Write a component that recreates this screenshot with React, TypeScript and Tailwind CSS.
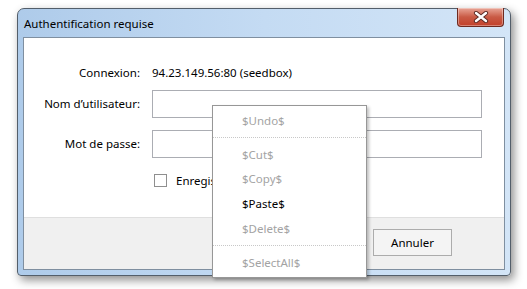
import React from "react";

const font = { fontFamily: '"Segoe UI", "Noto Sans", "Open Sans", sans-serif' };

function CloseButton() {
  return (
    <div className="-mt-px flex h-[19px] w-[47px] items-center justify-center rounded-b-[4px] border border-t-0 border-[#6e2a20] bg-gradient-to-b from-[#e8a597] via-[#c95a45] to-[#c2402a] shadow-[inset_0_0_0_1px_rgba(255,255,255,0.35)]">
      <svg width="16" height="12" viewBox="0 0 16 12">
        <path d="M3 2 L13 10 M13 2 L3 10" stroke="#5a2a24" strokeWidth="4.2" strokeLinecap="round" />
        <path d="M3 2 L13 10 M13 2 L3 10" stroke="#ffffff" strokeWidth="2.4" strokeLinecap="round" />
      </svg>
    </div>
  );
}

function MenuItem({ label, enabled = false }: { label: string; enabled?: boolean }) {
  return (
    <div className={`flex h-[25px] items-center pl-[29px] text-[11.5px] ${enabled ? "text-black" : "text-[#a3a3a3]"}`}>
      {label}
    </div>
  );
}

function Separator() {
  return (
    <div className="flex h-[9px] items-center">
      <div className="w-full border-t border-dotted border-[#c8c8c8]" />
    </div>
  );
}

export default function App() {
  return (
    <div className="relative h-[289px] w-[527px] overflow-hidden bg-white pl-[17px] pt-[8px]" style={font}>
      <div className="flex h-[268px] w-[494px] flex-col rounded-t-[7px] rounded-b-[4px] border border-[#535e6a] bg-gradient-to-r from-[#aecbea] via-[#c4dbf3] to-[#d3e5f7] shadow-[3px_4px_10px_rgba(0,0,0,0.45)]">
        <div className="flex h-[28px] items-start justify-between pr-[6px] pl-[6px]">
          <span className="mt-[6px] text-[11.5px] text-black">Authentification requise</span>
          <CloseButton />
        </div>

        <div className="mx-[5px] mb-[5px] flex flex-1 flex-col border border-[#7f8fa0] bg-white">
          <div className="grid grid-cols-[116px_1fr] items-center gap-x-[12px] pt-[27px] pr-[22px] text-[11.5px] text-black">
            <span className="h-[16px] text-right leading-[16px]">Connexion:</span>
            <span className="h-[16px] leading-[16px]">94.23.149.56:80 (seedbox)</span>

            <span className="mt-[9px] text-right">Nom d’utilisateur:</span>
            <div className="mt-[9px] h-[28px] border border-[#abadb3] bg-white" />

            <span className="mt-[12px] text-right">Mot de passe:</span>
            <div className="mt-[12px] h-[28px] border border-[#abadb3] bg-white" />

            <span />
            <div className="mt-[14px] flex items-center gap-[9px] pl-[2px]">
              <div className="h-[13px] w-[13px] border border-[#8f8f8f] bg-white" />
              <span>Enregistrer le mot de passe</span>
            </div>
          </div>

          <div className="mt-auto flex h-[52px] justify-end gap-[6px] border-t border-[#dfdfdf] bg-[#f0f0f0] pt-[11px] pr-[52px]">
            <button className="h-[27px] w-[79px] border border-[#acacac] bg-[#f4f4f4] text-[11.5px] text-black">OK</button>
            <button className="h-[27px] w-[79px] border border-[#acacac] bg-[#f4f4f4] text-[11.5px] text-black">Annuler</button>
          </div>
        </div>
      </div>

      <div className="absolute top-[105px] left-[212px] flex h-[173px] w-[155px] flex-col border border-[#979797] bg-white py-[2px] shadow-[2px_2px_3px_rgba(0,0,0,0.25)]">
        <MenuItem label="$Undo$" />
        <Separator />
        <MenuItem label="$Cut$" />
        <MenuItem label="$Copy$" />
        <MenuItem label="$Paste$" enabled />
        <MenuItem label="$Delete$" />
        <Separator />
        <MenuItem label="$SelectAll$" />
      </div>
    </div>
  );
}
